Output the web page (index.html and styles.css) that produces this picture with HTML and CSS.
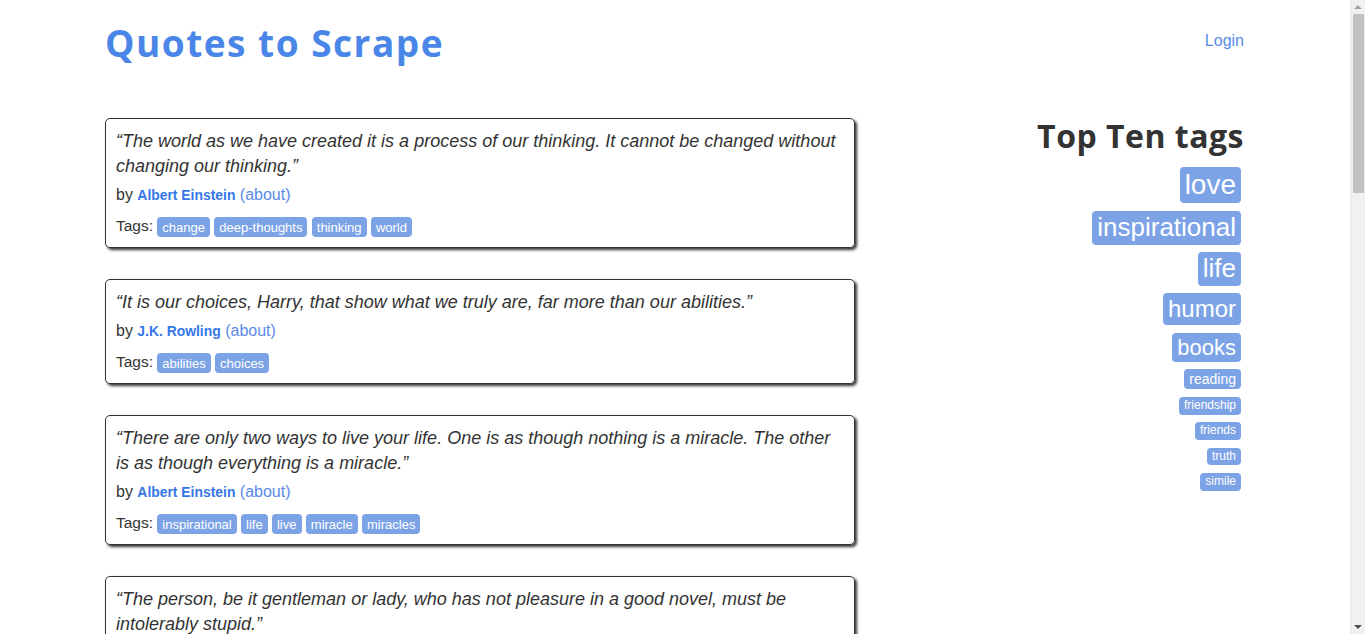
FILE: index.html
```html
<!DOCTYPE html>
<html lang="en">
<head>
<meta charset="UTF-8">
<title>Quotes to Scrape</title>
<link rel="stylesheet" href="styles.css">
</head>
<body>
<div class="page">
<div class="container">
  <header class="header-box">
    <h1 class="brand"><a href="#">Quotes to Scrape</a></h1>
    <p class="login"><a href="#">Login</a></p>
  </header>
  <div class="row">
    <main class="quotes">
      <div class="quote">
        <span class="text">“The world as we have created it is a process of our thinking. It cannot be changed without changing our thinking.”</span>
        <div class="byline">by <small class="author">Albert Einstein</small> <a href="#">(about)</a></div>
        <div class="tags">Tags: <a class="tag" href="#">change</a> <a class="tag" href="#">deep-thoughts</a> <a class="tag" href="#">thinking</a> <a class="tag" href="#">world</a></div>
      </div>
      <div class="quote">
        <span class="text">“It is our choices, Harry, that show what we truly are, far more than our abilities.”</span>
        <div class="byline">by <small class="author">J.K. Rowling</small> <a href="#">(about)</a></div>
        <div class="tags">Tags: <a class="tag" href="#">abilities</a> <a class="tag" href="#">choices</a></div>
      </div>
      <div class="quote">
        <span class="text">“There are only two ways to live your life. One is as though nothing is a miracle. The other is as though everything is a miracle.”</span>
        <div class="byline">by <small class="author">Albert Einstein</small> <a href="#">(about)</a></div>
        <div class="tags">Tags: <a class="tag" href="#">inspirational</a> <a class="tag" href="#">life</a> <a class="tag" href="#">live</a> <a class="tag" href="#">miracle</a> <a class="tag" href="#">miracles</a></div>
      </div>
      <div class="quote">
        <span class="text">“The person, be it gentleman or lady, who has not pleasure in a good novel, must be intolerably stupid.”</span>
        <div class="byline">by <small class="author">Jane Austen</small> <a href="#">(about)</a></div>
        <div class="tags">Tags: <a class="tag" href="#">aliteracy</a> <a class="tag" href="#">books</a> <a class="tag" href="#">classic</a> <a class="tag" href="#">humor</a></div>
      </div>
      <div class="quote">
        <span class="text">“Imperfection is beauty, madness is genius and it's better to be absolutely ridiculous than absolutely boring.”</span>
        <div class="byline">by <small class="author">Marilyn Monroe</small> <a href="#">(about)</a></div>
        <div class="tags">Tags: <a class="tag" href="#">be-yourself</a> <a class="tag" href="#">inspirational</a></div>
      </div>
      <div class="quote">
        <span class="text">“Try not to become a man of success. Rather become a man of value.”</span>
        <div class="byline">by <small class="author">Albert Einstein</small> <a href="#">(about)</a></div>
        <div class="tags">Tags: <a class="tag" href="#">adulthood</a> <a class="tag" href="#">success</a> <a class="tag" href="#">value</a></div>
      </div>
      <div class="quote">
        <span class="text">“It is better to be hated for what you are than to be loved for what you are not.”</span>
        <div class="byline">by <small class="author">André Gide</small> <a href="#">(about)</a></div>
        <div class="tags">Tags: <a class="tag" href="#">life</a> <a class="tag" href="#">love</a></div>
      </div>
      <div class="quote">
        <span class="text">“I have not failed. I've just found 10,000 ways that won't work.”</span>
        <div class="byline">by <small class="author">Thomas A. Edison</small> <a href="#">(about)</a></div>
        <div class="tags">Tags: <a class="tag" href="#">edison</a> <a class="tag" href="#">failure</a> <a class="tag" href="#">inspirational</a> <a class="tag" href="#">paraphrased</a></div>
      </div>
      <div class="quote">
        <span class="text">“A woman is like a tea bag; you never know how strong it is until it's in hot water.”</span>
        <div class="byline">by <small class="author">Eleanor Roosevelt</small> <a href="#">(about)</a></div>
        <div class="tags">Tags: <a class="tag" href="#">misattributed-eleanor-roosevelt</a></div>
      </div>
      <div class="quote">
        <span class="text">“A day without sunshine is like, you know, night.”</span>
        <div class="byline">by <small class="author">Steve Martin</small> <a href="#">(about)</a></div>
        <div class="tags">Tags: <a class="tag" href="#">humor</a> <a class="tag" href="#">obvious</a> <a class="tag" href="#">simile</a></div>
      </div>
      <nav class="pager">
        <a class="next" href="#">Next <span>→</span></a>
      </nav>
    </main>
    <aside class="tags-box">
      <h2>Top Ten tags</h2>
      <div class="tag-list">
        <a class="tag" href="#" style="font-size: 28px">love</a>
        <a class="tag" href="#" style="font-size: 26px">inspirational</a>
        <a class="tag" href="#" style="font-size: 26px">life</a>
        <a class="tag" href="#" style="font-size: 24px">humor</a>
        <a class="tag" href="#" style="font-size: 22px">books</a>
        <a class="tag" href="#" style="font-size: 14px">reading</a>
        <a class="tag" href="#" style="font-size: 12px">friendship</a>
        <a class="tag" href="#" style="font-size: 12px">friends</a>
        <a class="tag" href="#" style="font-size: 12px">truth</a>
        <a class="tag" href="#" style="font-size: 12px">simile</a>
      </div>
    </aside>
  </div>
</div>
<footer class="footer">
  <div class="container footer-inner">
    <p class="muted">Quotes by: <a href="#">GoodReads.com</a></p>
    <p class="copyright">Made with <span class="heart">❤</span> by <a href="#">Zyte</a></p>
  </div>
</footer>
</div>
<div class="scrollbar" aria-hidden="true">
  <span class="arrow up"></span>
  <span class="thumb"></span>
  <span class="arrow down"></span>
</div>
</body>
</html>
```

FILE: styles.css
```css
* {
  box-sizing: border-box;
}

html, body {
  margin: 0;
  padding: 0;
}

body {
  font-family: "Liberation Sans", Arial, sans-serif;
  font-size: 16px;
  line-height: 1.42857;
  color: #333333;
  background: #ffffff;
}

.page {
  padding-right: 15px;
}

a {
  color: #5a8ae8;
  text-decoration: none;
}

.container {
  width: 1140px;
  margin: 0 auto;
}

.header-box {
  display: flex;
  justify-content: space-between;
  align-items: flex-start;
  height: 118px;
}

.brand {
  margin: 23px 0 0;
  font-family: "Open Sans", "Liberation Sans", sans-serif;
  font-size: 37px;
  font-weight: 700;
  letter-spacing: 1.5px;
  line-height: 40px;
}

.brand a {
  color: #4a86e8;
}

.login {
  margin: 30px 1px 0 0;
  font-size: 16px;
  line-height: 22px;
}

.row {
  display: grid;
  grid-template-columns: 750px 360px;
  column-gap: 30px;
  align-items: start;
}

.quotes {
  display: flex;
  flex-direction: column;
  gap: 31px;
}

.quote {
  border: 1px solid #333333;
  border-radius: 5px;
  padding: 10px;
  box-shadow: 2px 2px 3px #333333;
}

.quote .text {
  display: block;
  font-size: 18px;
  line-height: 25px;
  font-style: italic;
  margin-bottom: 4px;
}

.byline {
  font-size: 16px;
  line-height: 23px;
}

.author {
  font-size: 13.9px;
  font-weight: 700;
  line-height: 1;
  color: #3677e8;
}

.tags {
  margin-top: 9px;
  font-size: 15.5px;
  line-height: 22px;
}

.tag {
  background-color: #7ca3e6;
  color: #ffffff;
  border-radius: 4px;
  padding: 2px 5px;
  white-space: nowrap;
}

.tags .tag {
  font-size: 13px;
  line-height: 1;
  padding: 2.5px 5px;
}

.pager {
  display: flex;
  justify-content: flex-end;
  padding: 0 0 20px;
}

.pager .next {
  display: inline-block;
  padding: 5px 14px;
  border: 1px solid #dddddd;
  border-radius: 15px;
  background: #ffffff;
  color: #337ab7;
}

.tags-box {
  text-align: right;
}

.tags-box h2 {
  margin: 0 1px 14px 0;
  font-family: "Open Sans", "Liberation Sans", sans-serif;
  font-size: 32px;
  font-weight: 700;
  letter-spacing: 0.5px;
  line-height: 35px;
  color: #333333;
}

.tag-list {
  display: flex;
  flex-direction: column;
  align-items: flex-end;
  gap: 7.5px;
  padding-right: 4px;
}

.tag-list .tag {
  display: inline-block;
  line-height: 1.15;
}

.footer {
  margin-top: 300px;
  padding: 40px 0;
  border-top: 1px solid #e7e7e7;
  background: #f5f5f5;
}

.footer-inner {
  display: flex;
  justify-content: space-between;
}

.footer p {
  margin: 0;
  color: #777777;
}

.heart {
  color: #e25555;
}

.scrollbar {
  position: fixed;
  top: 0;
  right: 0;
  width: 15px;
  height: 100vh;
  background: #f1f1f1;
  border-left: 1px solid #e8e8e8;
}

.scrollbar .thumb {
  position: absolute;
  top: 14px;
  left: 2px;
  width: 11px;
  height: 179px;
  background: #c1c1c1;
}

.scrollbar .arrow {
  position: absolute;
  left: 3px;
  width: 0;
  height: 0;
  border-left: 4px solid transparent;
  border-right: 4px solid transparent;
}

.scrollbar .up {
  top: 5px;
  border-bottom: 4px solid #a3a3a3;
}

.scrollbar .down {
  bottom: 5px;
  border-top: 4px solid #505050;
}
```
